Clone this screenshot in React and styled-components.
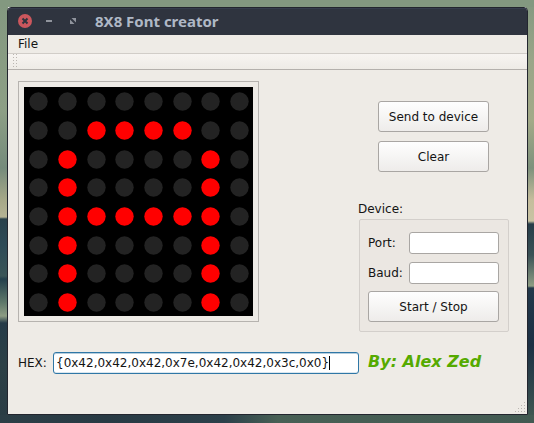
import React from "react";
import styled, { createGlobalStyle } from "styled-components";

const Global = createGlobalStyle`
  *, *::before, *::after { box-sizing: border-box; }
  body { margin: 0; font: 12px/14px "DejaVu Sans", sans-serif; color: #141414; }
`;

const Desktop = styled.div`
  width: 534px;
  height: 423px;
  padding: 7px 6px 8px 7px;
  overflow: hidden;
  background:
    linear-gradient(90deg, #2c3e46 0%, #283a44 20%, #2c404a 42%, #486055 52%, #425a52 100%) 0 415px / 534px 8px no-repeat,
    linear-gradient(#839880 0, #839880 7px, transparent 7px) 0 0 / 534px 7px no-repeat,
    linear-gradient(#839880 0, #8d9f85 110px, #758b7b 168px, #a6a888 200px, #b5b394 217px, #29414b 219px, #2d4a56 245px, #3a5557 276px, #24404c 279px, #5d7769 302px, #8d9c83 316px, #253b48 323px, #2c4046 365px, #2a3c44 423px) 0 0 / 8px 423px no-repeat,
    linear-gradient(#839880 0, #9aa588 60px, #a3aa88 120px, #7d917c 168px, #c5bd9c 200px, #c8c3a3 221px, #263d49 224px, #3a5156 255px, #8d9c83 286px, #22384a 288px, #1c3044 345px, #30474c 390px, #435b52 423px) 526px 0 / 8px 423px no-repeat;
`;

const Window = styled.main`
  width: 521px;
  height: 408px;
  display: flex;
  flex-direction: column;
  border: 1px solid #22252e;
  border-radius: 4px 4px 0 0;
  overflow: hidden;
  background: #eeebe6;
`;

const TitleBar = styled.header`
  height: 27px;
  flex: none;
  display: flex;
  align-items: center;
  padding: 0 0 2px 10px;
  background: #2f343f;
  border-top: 1px solid #363d4d;
`;

const WindowButton = styled.svg`
  display: block;
  width: ${(p) => p.$width}px;
  height: 14px;
  margin-right: ${(p) => p.$gap}px;
`;

const Title = styled.h1`
  margin: 0;
  font: bold 15px/20px "Noto Sans", sans-serif;
  color: #afb8c6;
`;

const MenuBar = styled.nav`
  height: 18px;
  flex: none;
  padding: 2px 10px;
`;

const ToolBar = styled.div`
  height: 17px;
  flex: none;
  padding-left: 5px;
  border-top: 1px solid #d1cdc8;
  border-bottom: 1px solid #b4b0ac;
  background: linear-gradient(#f7f4f1, #eeebe6);
`;

const Grip = styled.svg`
  display: block;
`;

const Content = styled.div`
  flex: 1;
  display: grid;
  grid-template-columns: 241px 151px;
  grid-template-rows: 270px 24px;
  column-gap: 99px;
  padding: 11px 10px 0;
`;

const MatrixFrame = styled.section`
  width: 241px;
  height: 241px;
  padding: 5px;
  border: 1px solid #b6b3af;
`;

const Matrix = styled.svg`
  display: block;
`;

const SidePanel = styled.aside`
  display: flex;
  flex-direction: column;
  padding-top: 20px;
`;

const Actions = styled.div`
  display: flex;
  flex-direction: column;
  gap: 9px;
  padding-left: 20px;
`;

const Button = styled.button`
  width: ${(p) => p.$width}px;
  height: 31px;
  padding: 0;
  border: 1px solid #a9a6a3;
  border-radius: 3px;
  background: linear-gradient(#fefefe, #eeecea);
  font: inherit;
  color: inherit;
`;

const GroupTitle = styled.h2`
  margin: 30px 0 3px;
  font: inherit;
`;

const Group = styled.div`
  width: 150px;
  height: 113px;
  margin-left: 1px;
  padding: 12px 9px 0 8px;
  border: 1px solid #d3cfcb;
  border-radius: 2px;
  background: #ebe7e2;
`;

const Field = styled.label`
  height: 22px;
  display: grid;
  grid-template-columns: 41px 90px;
  align-items: center;
  margin-bottom: ${(p) => p.$gap}px;
`;

const Input = styled.input`
  width: 100%;
  height: 22px;
  padding: 0;
  border: 1px solid #a9a6a3;
  border-radius: 3px;
  background: #fff;
  font: inherit;
`;

const Footer = styled.footer`
  grid-column: 1 / -1;
  display: flex;
  align-items: center;
`;

const HexLabel = styled.label`
  width: 35px;
`;

const HexValue = styled.div`
  width: 306px;
  height: 22px;
  display: flex;
  align-items: center;
  padding-left: 2px;
  border: 1px solid #2f77a6;
  border-radius: 3px;
  background: #fff;
  box-shadow: inset 0 1px #b5cddd, inset 0 -1px #d9e6ef;
  white-space: nowrap;
`;

const Caret = styled.span`
  width: 1px;
  height: 14px;
  background: #000;
`;

const Author = styled.strong`
  margin: 0 0 2px 9px;
  font: italic bold 16px/20px "DejaVu Sans", sans-serif;
  color: #55aa00;
  white-space: nowrap;
`;

const StatusBar = styled.div`
  height: 14px;
  flex: none;
  display: flex;
  justify-content: flex-end;
  padding: 2px 2px 0 0;
`;

const glyph = [0x00, 0x3c, 0x42, 0x42, 0x7e, 0x42, 0x42, 0x42];
const columns = [14.5, 43.5, 72.5, 100.5, 129.5, 158.5, 186.5, 215.5];
const rows = [14.5, 43.5, 72.5, 100.5, 129.5, 158.5, 186.5, 215.5];

function LedMatrix() {
  return (
    <Matrix width="229" height="229">
      <rect width="229" height="229" fill="#000" />
      {rows.map((cy, r) =>
        columns.map((cx, c) => (
          <circle key={`${r}-${c}`} cx={cx} cy={cy} r="9.2" fill={glyph[r] & (128 >> c) ? "#f00" : "#232323"} />
        ))
      )}
    </Matrix>
  );
}

const resizeDots = [];
for (let r = 0; r < 4; r++) for (let c = 3 - r; c < 4; c++) resizeDots.push([c * 3, r * 3]);

export default function App() {
  return (
    <>
      <Global />
      <Desktop>
        <Window>
          <TitleBar>
            <WindowButton $width={14} $gap={14} viewBox="0 0 14 14">
              <circle cx="7" cy="7" r="7" fill="#cc575d" />
              <path d="M4.5 4.5l5 5M9.5 4.5l-5 5" stroke="#2f343f" strokeWidth="2" />
            </WindowButton>
            <WindowButton $width={6} $gap={18} viewBox="0 0 6 14">
              <path d="M0 6h6v2H0z" fill="#90949d" />
            </WindowButton>
            <WindowButton $width={6} $gap={19} viewBox="0 0 6 14">
              <path d="M1.5 4H6v4.5zM0 5.5V10h4.5z" fill="#90949d" />
            </WindowButton>
            <Title>8X8 Font creator</Title>
          </TitleBar>
          <MenuBar>File</MenuBar>
          <ToolBar>
            <Grip width="5" height="15" fill="#bab6b1">
              {[0, 3, 6, 9, 12].map((y) => (
                <React.Fragment key={y}>
                  <rect x="0" y={y} width="1" height="1" />
                  <rect x="3" y={y} width="1" height="1" />
                </React.Fragment>
              ))}
            </Grip>
          </ToolBar>
          <Content>
            <MatrixFrame>
              <LedMatrix />
            </MatrixFrame>
            <SidePanel>
              <Actions>
                <Button $width={111}>Send to device</Button>
                <Button $width={111}>Clear</Button>
              </Actions>
              <GroupTitle>Device:</GroupTitle>
              <Group>
                <Field $gap={8}>Port:<Input /></Field>
                <Field $gap={7}>Baud:<Input /></Field>
                <Button $width={131}>Start / Stop</Button>
              </Group>
            </SidePanel>
            <Footer>
              <HexLabel>HEX:</HexLabel>
              <HexValue>
                {"{0x42,0x42,0x42,0x7e,0x42,0x42,0x3c,0x0}"}
                <Caret />
              </HexValue>
              <Author>By: Alex Zed</Author>
            </Footer>
          </Content>
          <StatusBar>
            <svg width="10" height="10" fill="#bab6b1">
              {resizeDots.map(([x, y]) => (
                <rect key={`${x}-${y}`} x={x} y={y} width="1" height="1" />
              ))}
            </svg>
          </StatusBar>
        </Window>
      </Desktop>
    </>
  );
}
